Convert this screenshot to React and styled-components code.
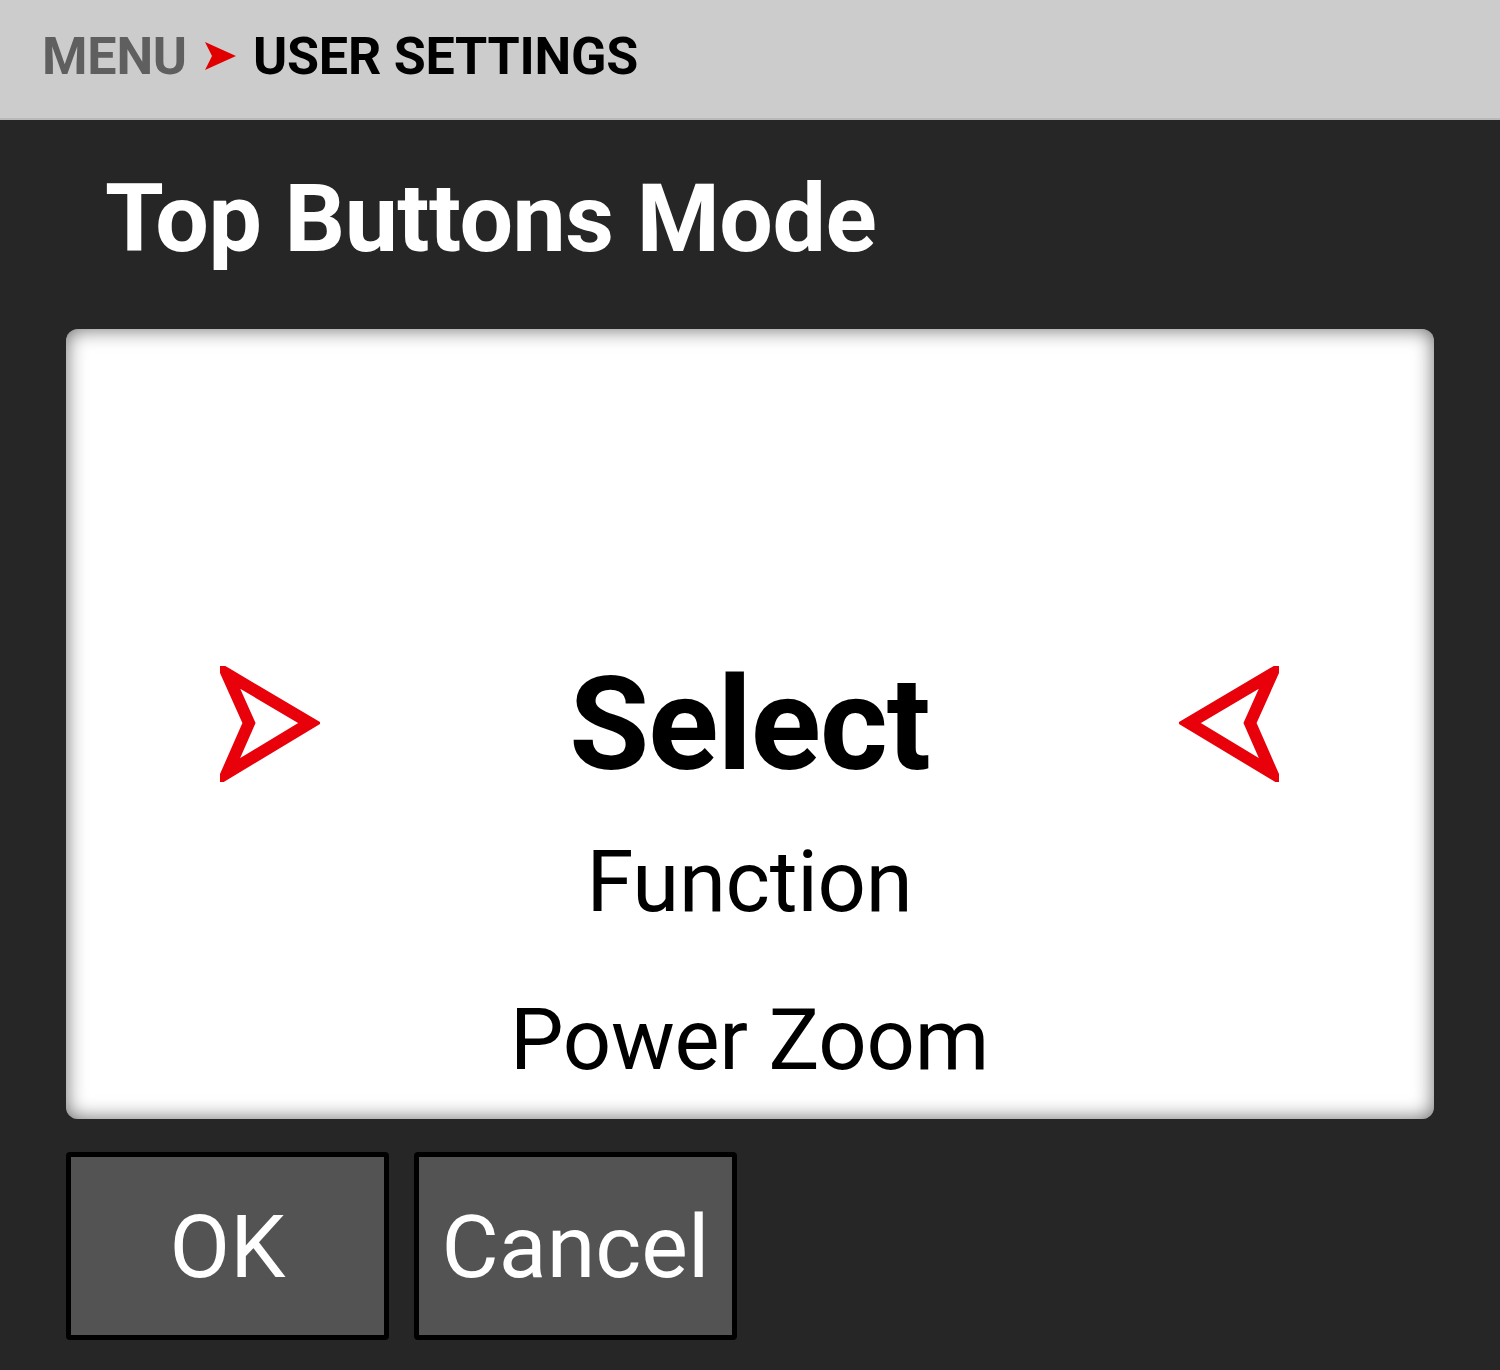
import styled, { createGlobalStyle } from 'styled-components';

const GlobalStyle = createGlobalStyle`
  html, body {
    margin: 0;
    padding: 0;
    background: #262626;
  }
  body {
    font-family: Roboto, "Noto Sans", sans-serif;
  }
`;

const Screen = styled.div`
  width: 1500px;
  height: 1370px;
  background: #262626;
  display: flex;
  flex-direction: column;
  overflow: hidden;
`;

const Breadcrumb = styled.header`
  height: 120px;
  background: #cccccc;
  border-bottom: 2px solid #b9b9b9;
  display: flex;
  align-items: center;
  gap: 16px;
  padding: 0 0 6px 42px;
  box-sizing: border-box;
  font-size: 52px;
  font-weight: 700;
  letter-spacing: -0.2px;
`;

const Crumb = styled.span`
  color: ${(p) => (p.$current ? '#000' : '#5f5f5f')};
`;

const Title = styled.h1`
  margin: 0;
  padding: 51px 0 0 105px;
  height: 209px;
  box-sizing: border-box;
  color: #fff;
  font-size: 95px;
  font-weight: 700;
  line-height: 1;
  letter-spacing: -0.5px;
`;

const Picker = styled.div`
  margin: 0 66px;
  height: 790px;
  background: #fff;
  border-radius: 12px;
  box-shadow: inset 0 0 20px rgba(0, 0, 0, 0.6);
  overflow: hidden;
  padding-top: 316px;
  box-sizing: border-box;
  display: flex;
  flex-direction: column;
`;

const Row = styled.div`
  height: 158px;
  flex: none;
  display: flex;
  align-items: center;
  justify-content: ${(p) => (p.$selected ? 'space-between' : 'center')};
  padding: 0 155px 0 154px;
  color: #000;
  font-size: ${(p) => (p.$selected ? '130px' : '85px')};
  font-weight: ${(p) => (p.$selected ? 700 : 400)};
  letter-spacing: ${(p) => (p.$selected ? '-1px' : '-0.3px')};
`;

const Buttons = styled.div`
  display: flex;
  gap: 25px;
  padding: 33px 0 0 66px;
`;

const Button = styled.button`
  width: 323px;
  height: 188px;
  background: #535353;
  border: 5px solid #000;
  border-radius: 4px;
  color: #fff;
  font-family: Roboto, sans-serif;
  font-size: 88px;
  font-weight: 400;
  padding: 0;
  cursor: pointer;
`;

const Chevron = ({ size = 34 }) => (
  <svg width={size} height={size} viewBox="0 0 34 34">
    <polygon points="2,3 33,17 2,31 9,17" fill="#e00000" />
  </svg>
);

const Pointer = ({ flip }) => (
  <svg
    width="100"
    height="116"
    viewBox="0 0 100 116"
    style={flip ? { transform: 'scaleX(-1)' } : undefined}
  >
    <polygon
      points="7,8 90,57 7,107 29,57"
      fill="none"
      stroke="#e8000b"
      strokeWidth="12"
      strokeLinejoin="miter"
    />
  </svg>
);

const items = ['Select', 'Function', 'Power Zoom'];

export default function App() {
  return (
    <Screen>
      <GlobalStyle />
      <Breadcrumb>
        <Crumb>MENU</Crumb>
        <Chevron />
        <Crumb $current>USER SETTINGS</Crumb>
      </Breadcrumb>
      <Title>Top Buttons Mode</Title>
      <Picker>
        {items.map((item, i) =>
          i === 0 ? (
            <Row key={item} $selected>
              <Pointer />
              <span>{item}</span>
              <Pointer flip />
            </Row>
          ) : (
            <Row key={item}>{item}</Row>
          )
        )}
      </Picker>
      <Buttons>
        <Button>OK</Button>
        <Button>Cancel</Button>
      </Buttons>
    </Screen>
  );
}
